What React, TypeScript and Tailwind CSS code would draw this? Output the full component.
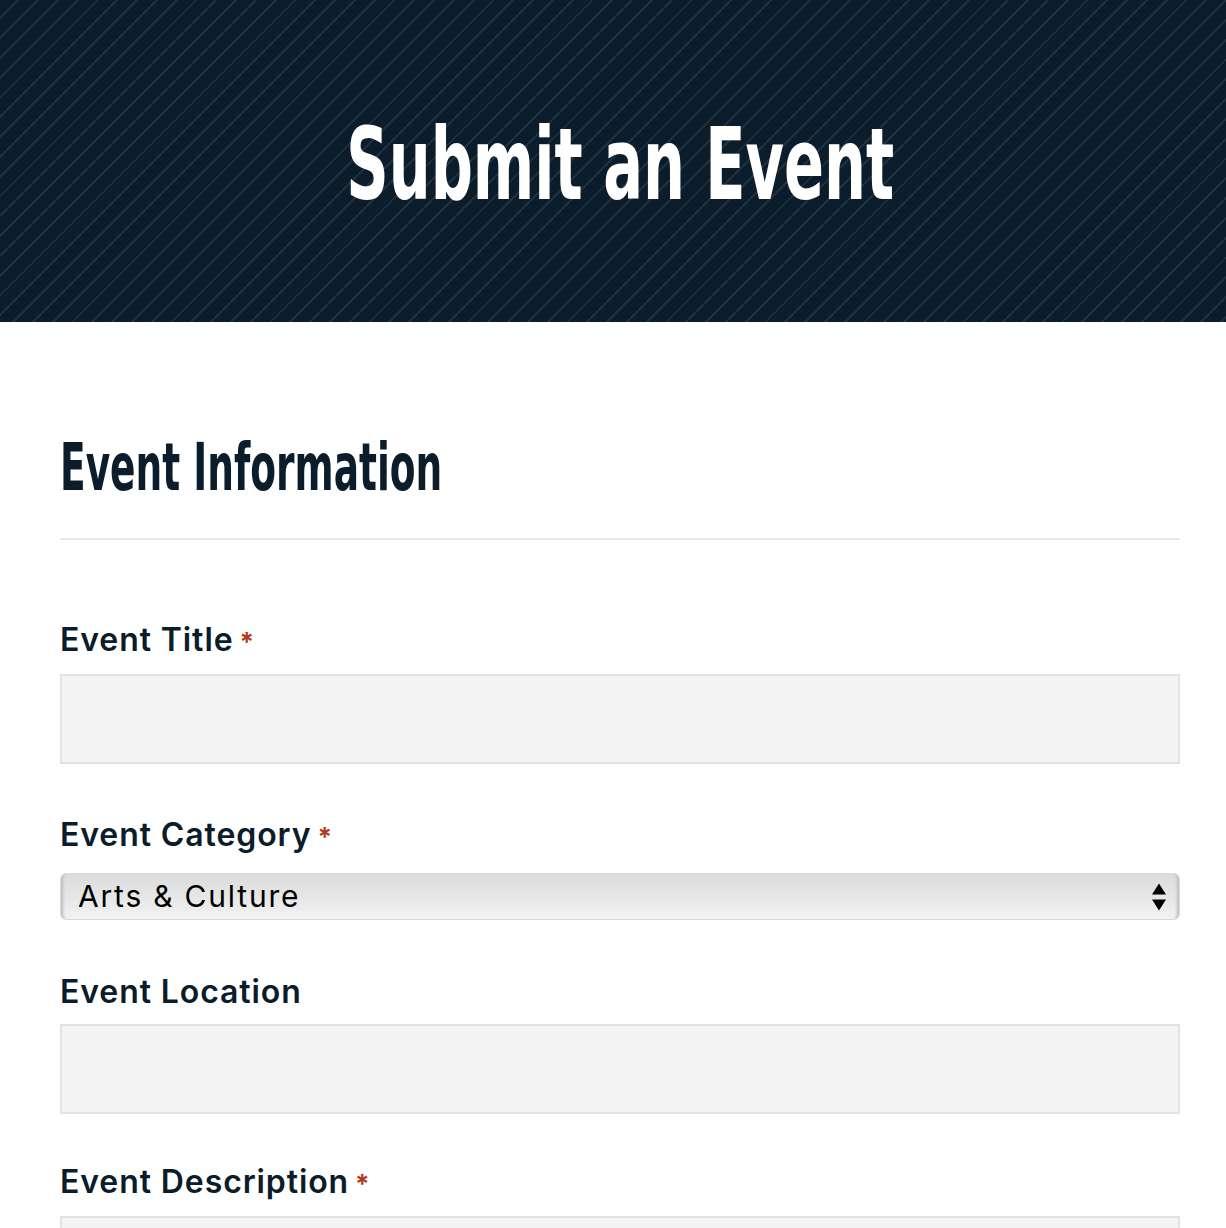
import React from "react";

const Label = ({ text, required }: { text: string; required?: boolean }) => (
  <label className="flex items-baseline text-[32px] leading-[36px] tracking-[0.9px] font-semibold text-[#0b1c2b] font-['Inter','Noto_Sans',sans-serif]">
    {text}
    {required && <span className="ml-[6px] text-[26px] font-bold text-[#b5391f]">*</span>}
  </label>
);

const TextInput = () => (
  <input
    type="text"
    className="block w-full h-[90px] bg-[#f4f4f4] border-2 border-[#e2e2e2] outline-none"
  />
);

const App = () => {
  return (
    <div className="h-screen w-full overflow-hidden bg-white">
      <div className="w-[1240px]">
        <header className="h-[322px] pt-[115px] flex justify-center bg-[#0b1c2b] bg-[repeating-linear-gradient(135deg,#0b1c2b_0px,#0b1c2b_12px,#1f3140_12px,#1f3140_14px)]">
          <h1 className="h-[100px] text-white font-bold text-[100px] leading-none whitespace-nowrap scale-x-[0.655] font-['DejaVu_Sans_Condensed','Liberation_Sans',sans-serif]">
            Submit an Event
          </h1>
        </header>

        <main className="px-[60px]">
          <h2 className="pt-[113px] pb-[37px] text-[#0b1c2b] font-bold text-[66px] leading-none whitespace-nowrap scale-x-[0.632] origin-left font-['DejaVu_Sans_Condensed','Liberation_Sans',sans-serif]">
            Event Information
          </h2>
          <hr className="border-0 h-[2px] bg-[#e8e8e8]" />

          <div className="pt-[82px] flex flex-col">
            <div className="flex flex-col gap-[14px]">
              <Label text="Event Title" required />
              <TextInput />
            </div>

            <div className="mt-[53px] flex flex-col gap-[18px]">
              <Label text="Event Category" required />
              <div className="relative">
                <select className="appearance-none block w-full h-[47px] pl-[17px] pr-[50px] rounded-[6px] border border-[#dadada] bg-[linear-gradient(#dcdcdc,#e7e7e7_55%,#f3f3f3)] shadow-[inset_5px_0_3px_-3px_#bdbdbd,inset_-5px_0_3px_-3px_#bdbdbd] text-[30px] tracking-[1.8px] text-black font-['Inter','Noto_Sans',sans-serif] outline-none">
                  <option>Arts &amp; Culture</option>
                  <option>Music</option>
                  <option>Sports</option>
                </select>
                <div className="pointer-events-none absolute right-[14px] top-1/2 -translate-y-1/2 flex flex-col items-center gap-[5px]">
                  <span className="w-0 h-0 border-l-[7px] border-r-[7px] border-b-[11px] border-l-transparent border-r-transparent border-b-black" />
                  <span className="w-0 h-0 border-l-[7px] border-r-[7px] border-t-[11px] border-l-transparent border-r-transparent border-t-black" />
                </div>
              </div>
            </div>

            <div className="mt-[54px] flex flex-col gap-[14px]">
              <Label text="Event Location" />
              <TextInput />
            </div>

            <div className="mt-[50px] flex flex-col gap-[14px]">
              <Label text="Event Description" required />
              <textarea className="block w-full h-[200px] bg-[#f4f4f4] border-2 border-[#e2e2e2] outline-none resize-none" />
            </div>
          </div>
        </main>
      </div>
    </div>
  );
};

export default App;
